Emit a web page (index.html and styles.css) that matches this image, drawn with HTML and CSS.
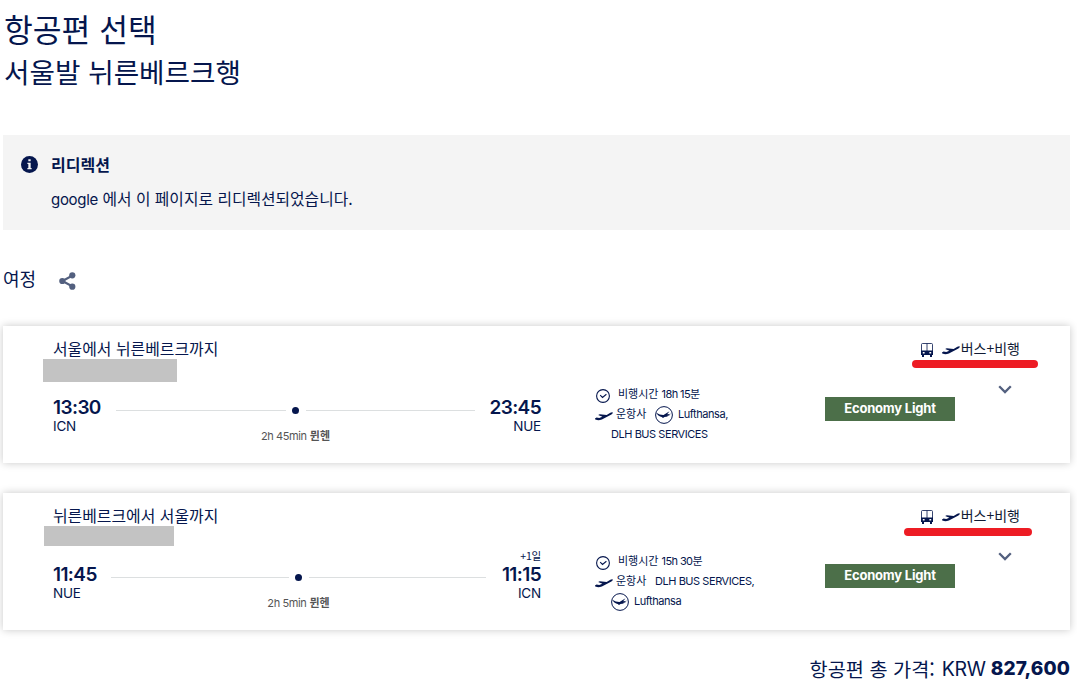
FILE: index.html
```html
<!DOCTYPE html>
<html lang="ko">
<head>
<meta charset="utf-8">
<title>항공편 선택</title>
<link rel="stylesheet" href="styles.css">
</head>
<body>
<svg class="defs" width="0" height="0">
  <symbol id="plane" viewBox="0 0 34 18"><path d="M0 13.500l3-1.500 5 1 6-2.600L6 7.200 9 5.500l13 1.700L29 3q4-1.800 5 0-.4 1.700-3 3L13 15.500q-6 2.400-11 .8L0 15z"/></symbol>
  <symbol id="bus" viewBox="0 0 12 14"><path d="M.5 8V1.500Q.5.500 1.500.500h9q1 0 1 1V8M6 .5V8" fill="none" stroke="currentColor" stroke-width=".8"/><path fill-rule="evenodd" d="M0 7.500h12V12h-1v2H9v-2H3v2H1v-2H0zM1.800 9v1.500h1.800V9zm6.600 0v1.500h1.800V9z"/></symbol>
  <symbol id="clock" viewBox="0 0 14 14"><path d="M7 .6a6.400 6.400 0 1 0 0 12.800A6.400 6.400 0 1 0 7 .6zM4.200 6.200L6.500 8.400 10.400 5.200" fill="none" stroke="currentColor" stroke-width="1.100"/></symbol>
  <symbol id="crane" viewBox="0 0 18 18"><circle cx="9" cy="9" r="8.400" fill="none" stroke="currentColor"/><path d="M1.200 6.700Q5 9 8.500 8.900L14.500 5.300l-2.300 3 4-.5-2.700 1.200 1.500.3-3 .6 1 .6-3.500.4-1.500 1-1.300-1Q3.500 10.500 1.200 6.700z"/></symbol>
  <symbol id="chevron" viewBox="0 0 14 9"><path d="M1.200 1.200L7 7 12.800 1.200" fill="none" stroke="currentColor" stroke-width="2.300"/></symbol>
</svg>
<main class="page">
  <h1 class="title">항공편 선택</h1>
  <h2 class="route">서울발 뉘른베르크행</h2>

  <section class="notice">
    <svg class="notice-icon" viewBox="0 0 16 16"><circle cx="8" cy="8" r="8"/><path d="M6.900 3h2.200v2H6.900zM6 6.300h3.100v4.900H10v1.200H6v-1.200h.9V7.500H6z" fill="#f4f4f4"/></svg>
    <div>
      <h3 class="notice-title">리디렉션</h3>
      <p class="notice-text"><span class="latin-body">google</span> 에서 이 페이지로 리디렉션되었습니다.</p>
    </div>
  </section>

  <div class="journey-head">
    <span>여정</span>
    <svg class="share" viewBox="0 0 17 18"><path d="M3.500 9L13.500 3.500M3.500 9l10 5.500" stroke="currentColor" stroke-width="2"/><circle cx="3.300" cy="9" r="3.100"/><circle cx="13.300" cy="3.300" r="3.100"/><circle cx="13.300" cy="14.700" r="3.100"/></svg>
  </div>

  <article class="card">
    <div class="journey">
      <h3 class="leg">서울에서 뉘른베르크까지</h3>
      <div class="timeline">
        <div class="point from-a"><b class="time">13:30</b><span class="code">ICN</span></div>
        <i class="line"></i>
        <div class="stop"><i class="dot"></i><span class="stop-text"><span class="stop-time">2h 45min</span> <b>뮌헨</b></span></div>
        <i class="line"></i>
        <div class="point end to-a"><b class="time">23:45</b><span class="code">NUE</span></div>
      </div>
    </div>
    <div class="details">
      <div class="row"><svg class="clock"><use href="#clock"/></svg><span class="duration">비행시간 <span class="num">18h 15</span>분</span></div>
      <div class="row"><svg class="plane"><use href="#plane"/></svg><span class="op">운항사</span><svg class="crane"><use href="#crane"/></svg><span class="carrier">Lufthansa,</span></div>
      <div class="row next"><span class="carrier caps">DLH BUS SERVICES</span></div>
    </div>
    <div class="fare">Economy Light</div>
    <div class="mode">
      <div class="mode-row"><svg class="bus"><use href="#bus"/></svg><svg class="plane"><use href="#plane"/></svg><span>버스+비행</span></div>
      <svg class="chevron"><use href="#chevron"/></svg>
    </div>
    <i class="mask mask-a"></i>
    <i class="marker marker-a"></i>
  </article>

  <article class="card">
    <div class="journey">
      <h3 class="leg">뉘른베르크에서 서울까지</h3>
      <div class="timeline">
        <div class="point from-b"><b class="time">11:45</b><span class="code">NUE</span></div>
        <i class="line"></i>
        <div class="stop"><i class="dot"></i><span class="stop-text"><span class="stop-time">2h 5min</span> <b>뮌헨</b></span></div>
        <i class="line"></i>
        <div class="point end to-b"><span class="plus">+1일</span><b class="time">11:15</b><span class="code">ICN</span></div>
      </div>
    </div>
    <div class="details">
      <div class="row"><svg class="clock"><use href="#clock"/></svg><span class="duration">비행시간 <span class="num">15h 30</span>분</span></div>
      <div class="row"><svg class="plane"><use href="#plane"/></svg><span class="op">운항사</span><span class="carrier caps">DLH BUS SERVICES,</span></div>
      <div class="row next"><svg class="crane"><use href="#crane"/></svg><span class="carrier">Lufthansa</span></div>
    </div>
    <div class="fare">Economy Light</div>
    <div class="mode">
      <div class="mode-row"><svg class="bus"><use href="#bus"/></svg><svg class="plane"><use href="#plane"/></svg><span>버스+비행</span></div>
      <svg class="chevron"><use href="#chevron"/></svg>
    </div>
    <i class="mask mask-b"></i>
    <i class="marker marker-b"></i>
  </article>

  <div class="total"><span class="total-label">항공편 총 가격:</span><span class="currency">KRW</span><b class="amount">827,600</b></div>
</main>
</body>
</html>
```

FILE: styles.css
```css
* { box-sizing: border-box; }
body { margin: 0; background: #fff; color: #05164d; font-family: "Noto Sans CJK KR", sans-serif; overflow: hidden; }
h1, h2, h3, p { margin: 0; font-weight: 400; }
svg { display: block; flex: none; fill: currentColor; }
.defs { position: absolute; }
.page { width: 1067px; margin-left: 3px; height: 686px; white-space: nowrap; }

.title { padding: 7px 0 0 1px; font-size: 31.300px; line-height: 44px; }
.route { padding-left: 1px; font-size: 27.700px; line-height: 40px; }

.notice { display: flex; gap: 12px; height: 95px; margin-top: 44px; padding: 17px 18px; background: #f4f4f4; }
.notice-icon { width: 17px; height: 17px; margin-top: 4px; }
.notice-title { font-size: 16px; font-weight: 700; line-height: 24px; margin-left: 1px; }
.notice-text { font-size: 15.800px; line-height: 24px; margin: 11px 0 0 1px; }
.latin-body { font-family: Inter, sans-serif; font-size: 15px; letter-spacing: -.3px; }

.journey-head { display: flex; gap: 23px; height: 96px; padding-top: 35px; font-size: 18px; line-height: 26px; }
.share { width: 17px; height: 18px; margin-top: 7px; color: #53607f; }

.card { position: relative; display: grid; grid-template-columns: 488px 54px 230px 130px 65px; height: 137px; margin-bottom: 30px; padding: 0 50px; background: #fff; box-shadow: 0 0 8px rgba(0, 0, 0, .22); }
.journey { grid-column: 1; padding-top: 11px; }
.leg { font-size: 15.900px; line-height: 24px; }
.timeline { display: flex; align-items: flex-start; padding-top: 20px; height: 80px; }
.point { display: flex; flex-direction: column; position: relative; font-family: Inter, sans-serif; margin-top: 16px; }
.end { align-items: flex-end; }
.from-a { width: 48px; }
.to-a { width: 51px; }
.from-b { width: 43px; }
.to-b { width: 40px; }
.time { font-size: 19px; font-weight: 600; line-height: 22px; letter-spacing: -.6px; }
.code { font-size: 13.500px; line-height: 16px; letter-spacing: -.2px; margin-top: -1px; }
.plus { position: absolute; right: 0; top: -15px; font: 10.500px/14px "Noto Sans CJK KR", sans-serif; letter-spacing: -.2px; }
.line { flex: 1; height: 1px; margin: 29px 0 0 15px; background: #dcdfe0; }
.stop { display: flex; flex-direction: column; align-items: center; width: 20px; margin-top: 26px; }
.stop + .line { margin: 29px 15px 0 0; }
.line + .stop { flex: none; }
.dot { width: 7px; height: 7px; border-radius: 50%; background: #05164d; }
.stop-text { margin-top: 12px; font-size: 11px; line-height: 18px; color: #555; }
.stop-time { font-family: Inter, sans-serif; letter-spacing: -.4px; }

.details { grid-column: 3; padding-top: 58px; font-size: 11px; }
.row { display: flex; align-items: center; height: 20px; }
.next { padding-left: 16px; }
.clock { width: 14px; height: 14px; margin: 4px 8px 0 1px; }
.plane { width: 18px; height: 10px; }
.details .plane { margin: 4px 3px 0 0; }
.duration, .op { margin-top: -2px; }
.num { letter-spacing: -.6px; }
.op { width: 39px; }
.crane { width: 18px; height: 18px; margin: 2px 5px 0 0; }
.carrier, .num { font-family: Inter, sans-serif; font-size: 11px; }
.carrier { letter-spacing: -.45px; margin-top: -1px; }
.next .carrier { margin-top: 0; }
.carrier.caps { letter-spacing: -.45px; }

.fare { grid-column: 4; height: 24px; margin-top: 71px; background: #4c6f49; color: #fff; font: 700 13px/23px Inter, sans-serif; letter-spacing: -.2px; text-align: center; }
.mode { grid-column: 5; display: flex; flex-direction: column; align-items: flex-end; padding-top: 11px; }
.mode-row { display: flex; align-items: center; font-size: 14px; line-height: 22px; color: #111b35; }
.bus { width: 12px; height: 14px; margin: 3px 9px 0 0; color: #05164d; }
.mode .plane { margin: 3px 1px 0 0; color: #05164d; }
.chevron { width: 14px; height: 9px; margin: 26px 8px 0 0; color: #53607f; }

.mask, .marker { position: absolute; }
.mask { background: #c3c3c3; }
.mask-a { left: 40px; top: 33px; width: 134px; height: 23px; }
.mask-b { left: 41px; top: 33px; width: 130px; height: 20px; }
.marker { height: 8px; border-radius: 4px; background: #ed1c24; }
.marker-a { left: 909px; top: 34px; width: 126px; }
.marker-b { left: 901px; top: 35px; width: 128px; }

.total { display: flex; justify-content: flex-end; align-items: center; height: 28px; margin-top: -5px; font-size: 20px; line-height: 28px; }
.total-label { font-size: 19.700px; margin-top: -1px; }
.currency, .amount { font-family: Inter, sans-serif; }
.currency { margin: 0 5px 0 7px; font-size: 19.500px; letter-spacing: -.3px; }
.amount { font-size: 19px; font-weight: 800; letter-spacing: .1px; }
```
